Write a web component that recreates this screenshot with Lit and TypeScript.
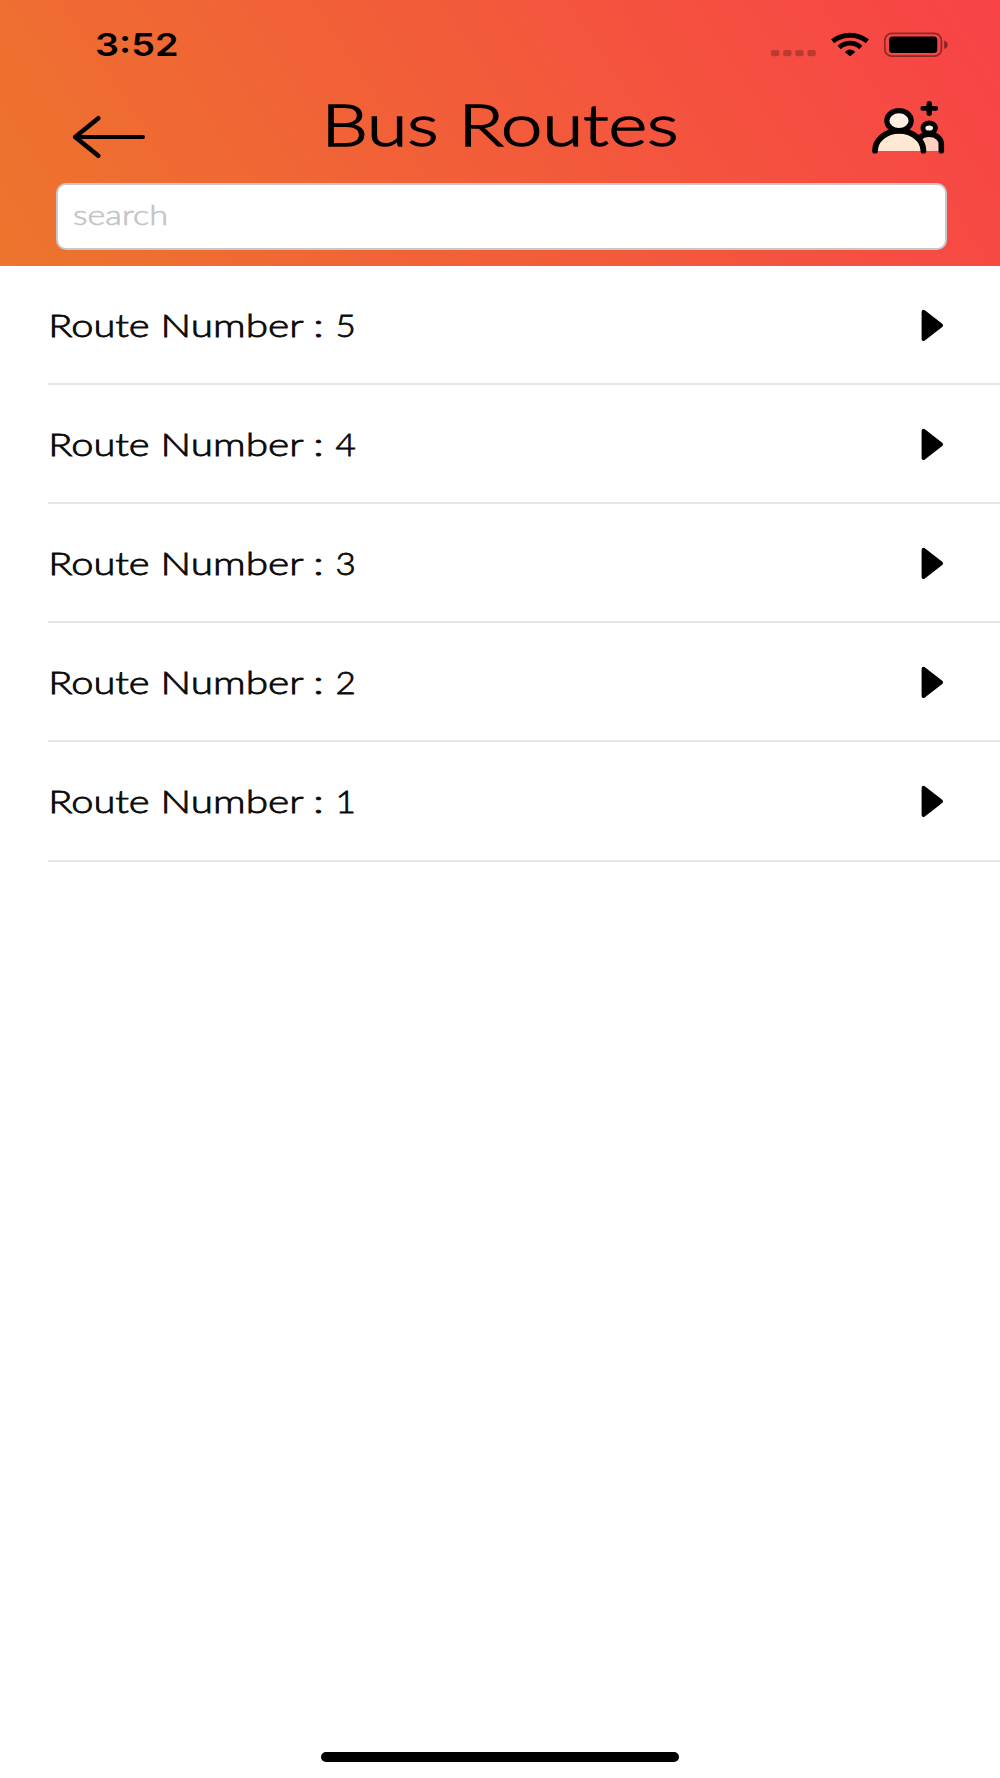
import { LitElement, html, svg, css } from "lit";
import { customElement, property } from "lit/decorators.js";

interface Word {
  text: string;
  x: number;
  width: number;
}

/** A line of text set word by word, each word stretched to its own width. */
@customElement("wide-text")
class WideText extends LitElement {
  static styles = css`
    :host { display: block; }
    svg { display: block; overflow: visible; }
    text { font-family: inherit; fill: currentColor; stroke: currentColor; stroke-width: var(--thicken, 0); }
  `;
  @property({ attribute: false }) words: Word[] = [];
  @property({ type: Number }) width = 0;
  @property({ type: Number }) height = 0;
  @property({ type: Number }) baseline = 0;

  render() {
    return html`<svg width=${this.width} height=${this.height}>
      ${this.words.map(
        (w) => svg`<text x=${w.x} y=${this.baseline} textLength=${w.width} lengthAdjust="spacingAndGlyphs">${w.text}</text>`
      )}
    </svg>`;
  }
}

@customElement("route-row")
class RouteRow extends LitElement {
  static styles = css`
    :host { display: block; }
    .row {
      display: flex;
      align-items: center;
      justify-content: space-between;
      box-sizing: border-box;
      height: 119.07px;
      margin-left: 48px;
      padding-right: 56.5px;
      border-bottom: 2px solid #e6e6e6;
    }
    .label { font: 300 31.2px Lato, "Liberation Sans", sans-serif; color: #0a0a0a; --thicken: 0.8px; }
    .play { display: block; }
  `;
  @property({ type: Number }) route = 0;

  render() {
    const words: Word[] = [
      { text: "Route", x: 0.3, width: 101.3 },
      { text: "Number", x: 112.5, width: 143 },
      { text: ":", x: 265, width: 11 },
      { text: String(this.route), x: 287.6, width: 20.3 },
    ];
    return html`<div class="row">
      <wide-text class="label" .words=${words} width="320" height="40" baseline="32.2"></wide-text>
      <svg class="play" width="24" height="36" viewBox="0 0 24 36">
        <path d="M3.6 4.8 21 18.4 3.6 32Z" fill="#000" stroke="#000" stroke-width="4" stroke-linejoin="round" />
      </svg>
    </div>`;
  }
}

@customElement("app-root")
class AppRoot extends LitElement {
  static styles = css`
    :host {
      display: flex;
      flex-direction: column;
      height: 1778px;
      background: #fff;
      font-family: Lato, "Liberation Sans", sans-serif;
      color: #000;
    }
    svg { display: block; }
    .header {
      box-sizing: border-box;
      height: 265.7px;
      background: linear-gradient(57deg, #ed752d 0%, #f84247 100%);
      display: flex;
      flex-direction: column;
    }
    .status {
      display: flex;
      justify-content: space-between;
      align-items: center;
      height: 90px;
      padding: 0 51px 0 95px;
    }
    .time { font: 600 31.5px Inter, "Liberation Sans", sans-serif; }
    .indicators { display: flex; gap: 15px; }
    .nav {
      display: flex;
      justify-content: space-between;
      height: 92.5px;
      padding: 0 54px 0 71px;
    }
    .title { font-size: 57.5px; font-weight: 300; --thicken: 1.5px; }
    .search {
      display: flex;
      align-items: center;
      box-sizing: border-box;
      height: 67.5px;
      margin: 0 53.5px 0 56px;
      padding-left: 15px;
      border: 2px solid #c6c9cc;
      border-radius: 10px;
      background: #fff;
    }
    .hint { font-size: 28.3px; font-weight: 300; color: #c4c4c4; --thicken: 0.6px; }
    .list { flex: 1; padding-top: 0.5px; }
    .home {
      align-self: center;
      width: 358px;
      height: 10px;
      margin-bottom: 16px;
      border-radius: 5px;
      background: #000;
    }
  `;

  private routes = [5, 4, 3, 2, 1];

  render() {
    return html`
      <div class="header">
        <div class="status">
          <wide-text class="time" .words=${[{ text: "3:52", x: 0, width: 83.5 }]} width="84" height="40" baseline="31.2"></wide-text>
          <div class="indicators">
            <svg width="46" height="26" viewBox="770 32 46 26" fill="#000" fill-opacity=".24">
              <rect x="771" y="50" width="8.3" height="6.3" rx="2" />
              <rect x="783.2" y="50" width="8.3" height="6.3" rx="2" />
              <rect x="795.3" y="50" width="8.3" height="6.3" rx="2" />
              <rect x="807.5" y="50" width="8.3" height="6.3" rx="2" />
            </svg>
            <svg width="38" height="26" viewBox="831 32 38 26" fill="none" stroke="#000">
              <path d="M832.6 41.2A28 28 0 0 1 867.4 41.2" stroke-width="5" />
              <path d="M839.2 47.4A16 16 0 0 1 860.8 47.4" stroke-width="4.8" />
              <path d="M844.8 51.9Q850 47.2 855.3 51.9L850.8 55.7Q850 56.2 849.2 55.7Z" fill="#000" stroke="none" />
            </svg>
            <svg width="65" height="26" viewBox="884 32 65 26">
              <rect x="884.8" y="33.4" width="56.6" height="22.8" rx="7" fill="none" stroke="#000" stroke-opacity=".42" stroke-width="1.8" />
              <rect x="889" y="36.5" width="48.3" height="16.5" rx="3.5" />
              <path d="M944.2 40.6Q947.7 41.8 947.7 44.8T944.2 49Z" fill-opacity=".45" />
            </svg>
          </div>
        </div>
        <div class="nav">
          <svg width="76" height="70" viewBox="71 90 76 70" fill="none" stroke="#000" stroke-linecap="round" stroke-linejoin="round">
            <path d="M75 137H143" stroke-width="4" />
            <path d="M98.3 118.2 75.2 137 98.3 155.8" stroke-width="4.6" />
          </svg>
          <wide-text
            class="title"
            .words=${[{ text: "Bus", x: -4.5, width: 117 }, { text: "Routes", x: 132.5, width: 220 }]}
            width="365" height="80" baseline="56.3"
          ></wide-text>
          <svg width="76" height="70" viewBox="870 90 76 70" stroke="#000" stroke-linecap="round">
            <path d="M919 151V139Q924 134.3 929 134.3C937 134.3 941.3 139 941.3 144V151Z" fill="#ffcfc0" stroke="none" />
            <path d="M920 137.3Q924 134.3 929 134.3C937 134.3 941.3 139 941.3 144V150.7" fill="none" stroke-width="5.6" />
            <path d="M875 151A24.2 19.8 0 0 1 923.4 151Z" fill="#ffe9d2" stroke="none" />
            <path d="M875 150.7A24.2 19.8 0 0 1 923.4 150.7" fill="none" stroke-width="5.8" />
            <ellipse cx="899" cy="120.7" rx="12.2" ry="10" fill="#fff0e3" stroke-width="5.2" />
            <ellipse cx="929.2" cy="128" rx="6.3" ry="5" fill="#fff0e3" stroke-width="4.9" />
            <path d="M922.7 108.4H935.8" stroke-width="4.6" />
            <path d="M929.2 103.7V113.3" stroke-width="5.4" />
          </svg>
        </div>
        <div class="search">
          <wide-text class="hint" .words=${[{ text: "search", x: 0, width: 95 }]} width="100" height="40" baseline="28.5"></wide-text>
        </div>
      </div>
      <div class="list">${this.routes.map((r) => html`<route-row .route=${r}></route-row>`)}</div>
      <div class="home"></div>
    `;
  }
}
